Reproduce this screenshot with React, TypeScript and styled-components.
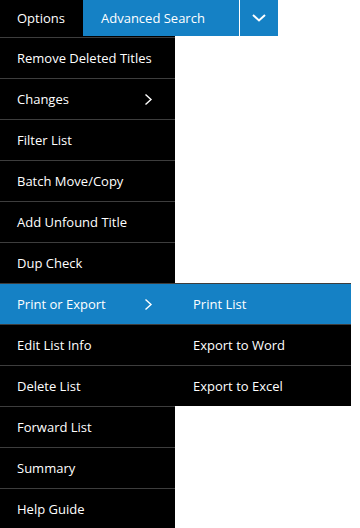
import React from "react";
import styled, { createGlobalStyle } from "styled-components";

const BLUE = "#1581c5";
const LINE = "#3d3d3d";

const GlobalStyle = createGlobalStyle`
  html, body {
    margin: 0;
    padding: 0;
    background: #fff;
  }
  body {
    font-family: "Open Sans", "Liberation Sans", sans-serif;
    font-size: 13px;
    color: #fff;
    -webkit-font-smoothing: antialiased;
  }
`;

const TopBar = styled.div`
  display: flex;
  height: 36px;
  width: 278px;
`;

const OptionsTab = styled.div`
  display: flex;
  align-items: center;
  width: 83px;
  padding-left: 17px;
  box-sizing: border-box;
  background: #000;
`;

const SearchButton = styled.div`
  display: flex;
  align-items: center;
  width: 156px;
  padding-left: 18px;
  box-sizing: border-box;
  background: ${BLUE};
`;

const Divider = styled.div`
  width: 1px;
  background: #fff;
`;

const CaretButton = styled.div`
  display: flex;
  align-items: center;
  justify-content: center;
  width: 38px;
  background: ${BLUE};
`;

const Menu = styled.ul`
  list-style: none;
  margin: 0;
  padding: 1px 0 0;
  width: 175px;
  background: #000;
`;

const Item = styled.li<{ $active?: boolean; $indent?: number }>`
  position: relative;
  display: flex;
  align-items: center;
  justify-content: space-between;
  height: 41px;
  box-sizing: border-box;
  border-top: 1px solid ${LINE};
  padding: 0 22px 0 ${(p) => p.$indent ?? 17}px;
  background: ${(p) => (p.$active ? BLUE : "#000")};
  white-space: nowrap;
`;

const Submenu = styled.ul`
  position: absolute;
  top: -1px;
  left: 100%;
  width: 176px;
  margin: 0;
  padding: 0;
  list-style: none;
  background: #000;
`;

const Arrow = () => (
  <svg width="9" height="13" viewBox="0 0 9 13">
    <path d="M1.5 1.5 L7 6.5 L1.5 11.5" fill="none" stroke="#fff" strokeWidth="1.4" />
  </svg>
);

const Chevron = () => (
  <svg width="14" height="8" viewBox="0 0 14 8">
    <path d="M1 1 L7 6.5 L13 1" fill="none" stroke="#fff" strokeWidth="2" />
  </svg>
);

const items = [
  "Remove Deleted Titles",
  "Changes",
  "Filter List",
  "Batch Move/Copy",
  "Add Unfound Title",
  "Dup Check",
  "Print or Export",
  "Edit List Info",
  "Delete List",
  "Forward List",
  "Summary",
  "Help Guide",
];

const withArrow = ["Changes", "Print or Export"];
const exportOptions = ["Print List", "Export to Word", "Export to Excel"];

const App: React.FC = () => (
  <>
    <GlobalStyle />
    <TopBar>
      <OptionsTab>Options</OptionsTab>
      <SearchButton>Advanced Search</SearchButton>
      <Divider />
      <CaretButton>
        <Chevron />
      </CaretButton>
    </TopBar>
    <Menu>
      {items.map((label) => {
        const open = label === "Print or Export";
        return (
          <Item key={label} $active={open}>
            <span>{label}</span>
            {withArrow.includes(label) && <Arrow />}
            {open && (
              <Submenu>
                {exportOptions.map((opt, i) => (
                  <Item key={opt} $active={i === 0} $indent={18}>
                    {opt}
                  </Item>
                ))}
              </Submenu>
            )}
          </Item>
        );
      })}
    </Menu>
  </>
);

export default App;
